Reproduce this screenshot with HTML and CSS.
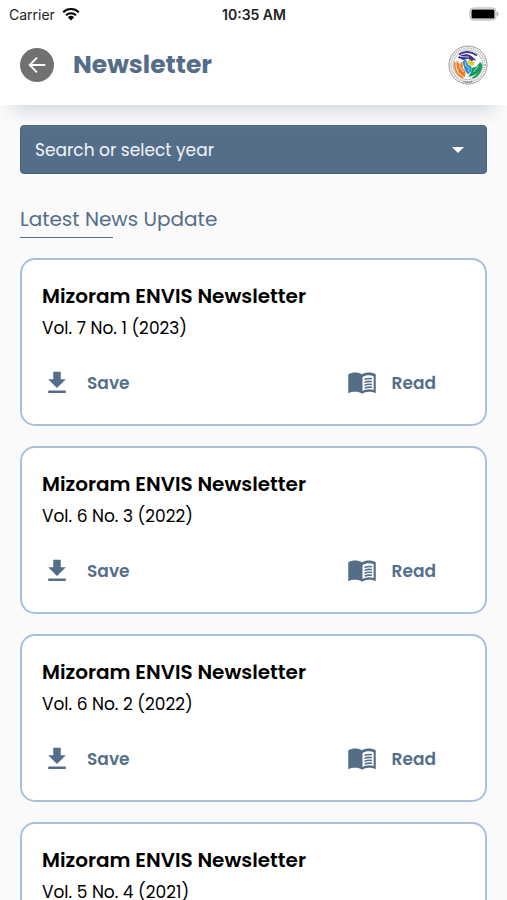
FILE: index.html
```html
<!DOCTYPE html>
<html lang="en">
<head>
<meta charset="utf-8">
<meta name="viewport" content="width=device-width, initial-scale=1">
<title>Newsletter</title>
<link rel="stylesheet" href="styles.css">
</head>
<body>
<svg class="sprite" aria-hidden="true">
  <symbol id="download" viewBox="0 0 24 24"><path d="M19 9h-4V3H9v6H5l7 7 7-7zM5 18v2h14v-2H5z"/></symbol>
  <symbol id="book" viewBox="0 1 24 24">
    <path fill-rule="evenodd" d="M12 6c-1.450-1.100-3.550-1.500-5.500-1.500S2.450 4.900 1 6v15.200c1.800-.9 3.550-1.200 5.500-1.200s4.050.4 5.500 1.500c1.350-.85 3.800-1.500 5.500-1.500 1.650 0 3.700.3 5.500 1.200V6c-1.450-1.100-3.550-1.500-5.500-1.500S13.450 4.900 12 6zm.4 2.300c1.350-1 3.400-1.500 5.100-1.500 1.300 0 2.600.2 3.800.8v11c-1.200-.4-2.500-.6-3.800-.6-1.700 0-3.750.6-5.100 1.400z"/>
    <path fill="none" stroke="currentColor" stroke-width="1.200" d="M14 10.200q3-1.200 6-.6M14 12.500q3-1.200 6-.6M14 14.800q3-1.200 6-.6M14 17.100q3-1.200 6-.6"/>
  </symbol>
</svg>

<div class="top">
  <div class="status">
    <div class="carrier">
      <span>Carrier</span>
      <svg class="wifi" viewBox="0 0 18 14" aria-hidden="true">
        <path d="M1.200 5.200a11.200 11.200 0 0 1 15.600 0M4 8.200a7.200 7.200 0 0 1 10 0"/>
        <path class="dot" d="M9 13.500 5.900 10.300a4.500 4.500 0 0 1 6.200 0z"/>
      </svg>
    </div>
    <span class="time">10:35 AM</span>
    <svg class="battery" viewBox="0 0 30 14" aria-hidden="true">
      <rect class="shell" x="1" y="1" width="26" height="12" rx="3.500"/>
      <rect x="2.500" y="2.500" width="23" height="9" rx="1.500"/>
      <path class="cap" d="M28 5v4c2-.7 2-3.300 0-4z"/>
    </svg>
  </div>
  <header class="bar">
    <button class="back" type="button" aria-label="Back">
      <svg viewBox="0 0 24 24" aria-hidden="true"><path d="M21 12H4.500M12 4 4 12l8 8"/></svg>
    </button>
    <h1>Newsletter</h1>
    <svg class="logo" viewBox="0 0 40 40" role="img" aria-label="ENVIS emblem">
      <circle class="rim" cx="20" cy="20" r="19"/>
      <circle class="lettering" cx="20" cy="20" r="16.800"/>
      <circle class="inner" cx="20" cy="20" r="14.800"/>
      <g fill="none" stroke-width="1.800">
        <path stroke="#3a3393" d="M11 9.500q9-5.500 18 1"/>
        <path stroke="#ee8a3c" d="M6.800 17q-1.300 11 8.700 16"/>
        <path stroke="#18995a" d="M33.300 18.500q.5 11-8.800 14.500"/>
      </g>
      <path fill="#3a3393" d="M9.500 12.500c4-3.500 10-4.500 14-1.500l5 4.500-3.500-.5-1 1.500-4-3-4 1.500c-2-.2-4-1.500-6.500-2.500z"/>
      <path fill="#ee7d2b" d="M8.500 15.500 13 20l-.5-3.500 2 1 .5 5.500 2.500 4-.5 5c-6-2.500-9.500-8-8.500-16.500z"/>
      <path fill="#18995a" d="M32.500 16.500c1.500 7-1 12.500-8.500 14.500l-4 1 3-4.500 1-4.500 4.500-1.500z"/>
      <path fill="#e8c81c" d="m19 17 3-2.500 2 2.200 3-.2-1 3.500-3.500.8z"/>
      <path fill="#2d8fcb" d="m14.500 16.500 3-2 3 5.500 3 1.500v4.500l-3.500 3.500-3-4-1.500-5z"/>
      <path fill="none" stroke="#8bd0ee" d="m17 17 1 4 3 2-.5 4"/>
      <path fill="none" stroke="#fff" stroke-width=".7" d="m12 11.500 9 .5M11 20l4.500 7M30.500 21l-5 6"/>
      <path fill="none" stroke="#555" stroke-width="1.200" stroke-dasharray="1 .6" d="M15.500 36.500q4.500 1.200 9 0"/>
    </svg>
  </header>
</div>

<main class="content">
  <div class="picker">
    <select aria-label="Search or select year">
      <option>Search or select year</option>
      <option>2023</option>
      <option>2022</option>
      <option>2021</option>
    </select>
    <svg class="caret" viewBox="0 0 12 6" aria-hidden="true"><path d="M0 0h12L6 6z"/></svg>
  </div>

  <h2>Latest News Update</h2>

  <div class="issues">
    <article class="card">
      <h3>Mizoram ENVIS Newsletter</h3>
      <p>Vol. 7 No. 1 (2023)</p>
      <div class="actions">
        <button type="button"><svg aria-hidden="true"><use href="#download"/></svg>Save</button>
        <button type="button"><svg aria-hidden="true"><use href="#book"/></svg>Read</button>
      </div>
    </article>
    <article class="card">
      <h3>Mizoram ENVIS Newsletter</h3>
      <p>Vol. 6 No. 3 (2022)</p>
      <div class="actions">
        <button type="button"><svg aria-hidden="true"><use href="#download"/></svg>Save</button>
        <button type="button"><svg aria-hidden="true"><use href="#book"/></svg>Read</button>
      </div>
    </article>
    <article class="card">
      <h3>Mizoram ENVIS Newsletter</h3>
      <p>Vol. 6 No. 2 (2022)</p>
      <div class="actions">
        <button type="button"><svg aria-hidden="true"><use href="#download"/></svg>Save</button>
        <button type="button"><svg aria-hidden="true"><use href="#book"/></svg>Read</button>
      </div>
    </article>
    <article class="card">
      <h3>Mizoram ENVIS Newsletter</h3>
      <p>Vol. 5 No. 4 (2021)</p>
      <div class="actions">
        <button type="button"><svg aria-hidden="true"><use href="#download"/></svg>Save</button>
        <button type="button"><svg aria-hidden="true"><use href="#book"/></svg>Read</button>
      </div>
    </article>
  </div>
</main>
</body>
</html>
```
FILE: styles.css
```css
:root {
  --blue: #546e89;
  --line: #a9c0db;
}

* { box-sizing: border-box; }

body {
  margin: 0;
  height: 100vh;
  display: flex;
  flex-direction: column;
  background: #fafafa;
  color: #000;
  font-family: Poppins, Inter, sans-serif;
}

h1, h2, h3, p { margin: 0; }

button, select {
  font: inherit;
  border: 0;
  padding: 0;
  cursor: pointer;
}

.sprite { display: none; }

.top {
  flex: none;
  background: #fff;
  box-shadow: 0 20px 16px -14px #d3d8df;
}

.status {
  display: grid;
  grid-template-columns: 1fr auto 1fr;
  align-items: center;
  height: 28px;
  padding: 0 8px 0 9px;
  font-family: Inter, sans-serif;
  font-size: 14px;
  color: #222;
}

.carrier {
  display: flex;
  align-items: center;
  gap: 7px;
}

.wifi {
  width: 18px;
  height: 14px;
  fill: none;
  stroke: #000;
  stroke-width: 2;
}

.wifi .dot { fill: #000; stroke: none; }

.time { font-weight: 600; }

.battery {
  justify-self: end;
  width: 30px;
  height: 14px;
}

.battery .shell { fill: #fff; stroke: #aaa; stroke-width: 1; }
.battery .cap { fill: #aaa; }

.bar {
  display: flex;
  align-items: center;
  height: 77px;
  padding: 0 19px 3px 20px;
}

.back {
  display: grid;
  place-items: center;
  width: 34px;
  height: 34px;
  border-radius: 50%;
  background: #717171;
}

.back svg {
  width: 22px;
  height: 22px;
  fill: none;
  stroke: #fff;
  stroke-width: 2;
}

h1 {
  flex: 1;
  margin-left: 19px;
  color: var(--blue);
  font-size: 25px;
  line-height: 36px;
  font-weight: 700;
}

.logo { width: 40px; height: 40px; }
.logo .rim { fill: #fff; stroke: #999; stroke-width: 1; }
.logo .lettering { fill: none; stroke: #aaa; stroke-width: 2; stroke-dasharray: 1 1; }
.logo .inner { fill: #fff; stroke: #bbb; stroke-width: 1; }

.content {
  flex: 1;
  min-height: 0;
  padding: 20px;
  overflow-y: auto;
  scrollbar-width: none;
  /* lets the header's shadow fall over the scrolling area */
  position: relative;
  z-index: -1;
}

.picker { position: relative; }

select {
  display: block;
  width: 100%;
  height: 49px;
  padding: 0 44px 0 14px;
  appearance: none;
  border: 1px solid #47627d;
  border-radius: 4px;
  background: var(--blue);
  color: #f1f4f7;
  font-size: 17px;
}

.caret {
  position: absolute;
  right: 23px;
  top: 22px;
  width: 12px;
  height: 6px;
  fill: #fff;
  pointer-events: none;
}

h2 {
  margin-top: 29px;
  color: var(--blue);
  font-size: 20px;
  line-height: 32px;
  font-weight: 400;
}

h2::after {
  content: "";
  display: block;
  width: 20%;
  height: 1px;
  margin-top: 2px;
  background: var(--blue);
}

.issues {
  display: grid;
  gap: 20px;
  margin-top: 20px;
}

.card {
  padding: 20px 20px 26px;
  border: 2px solid var(--line);
  border-radius: 15px;
  background: #fff;
}

h3 {
  font-size: 20px;
  line-height: 32px;
  font-weight: 600;
}

.card p {
  font-size: 17px;
  line-height: 32px;
}

.actions {
  display: flex;
  justify-content: space-between;
  margin-top: 24px;
  padding-right: 29px;
}

.actions button {
  display: flex;
  align-items: center;
  gap: 15px;
  background: none;
  color: var(--blue);
  font-size: 17px;
  line-height: 30px;
  font-weight: 600;
}

.actions svg {
  width: 30px;
  height: 30px;
  fill: currentColor;
}
```
